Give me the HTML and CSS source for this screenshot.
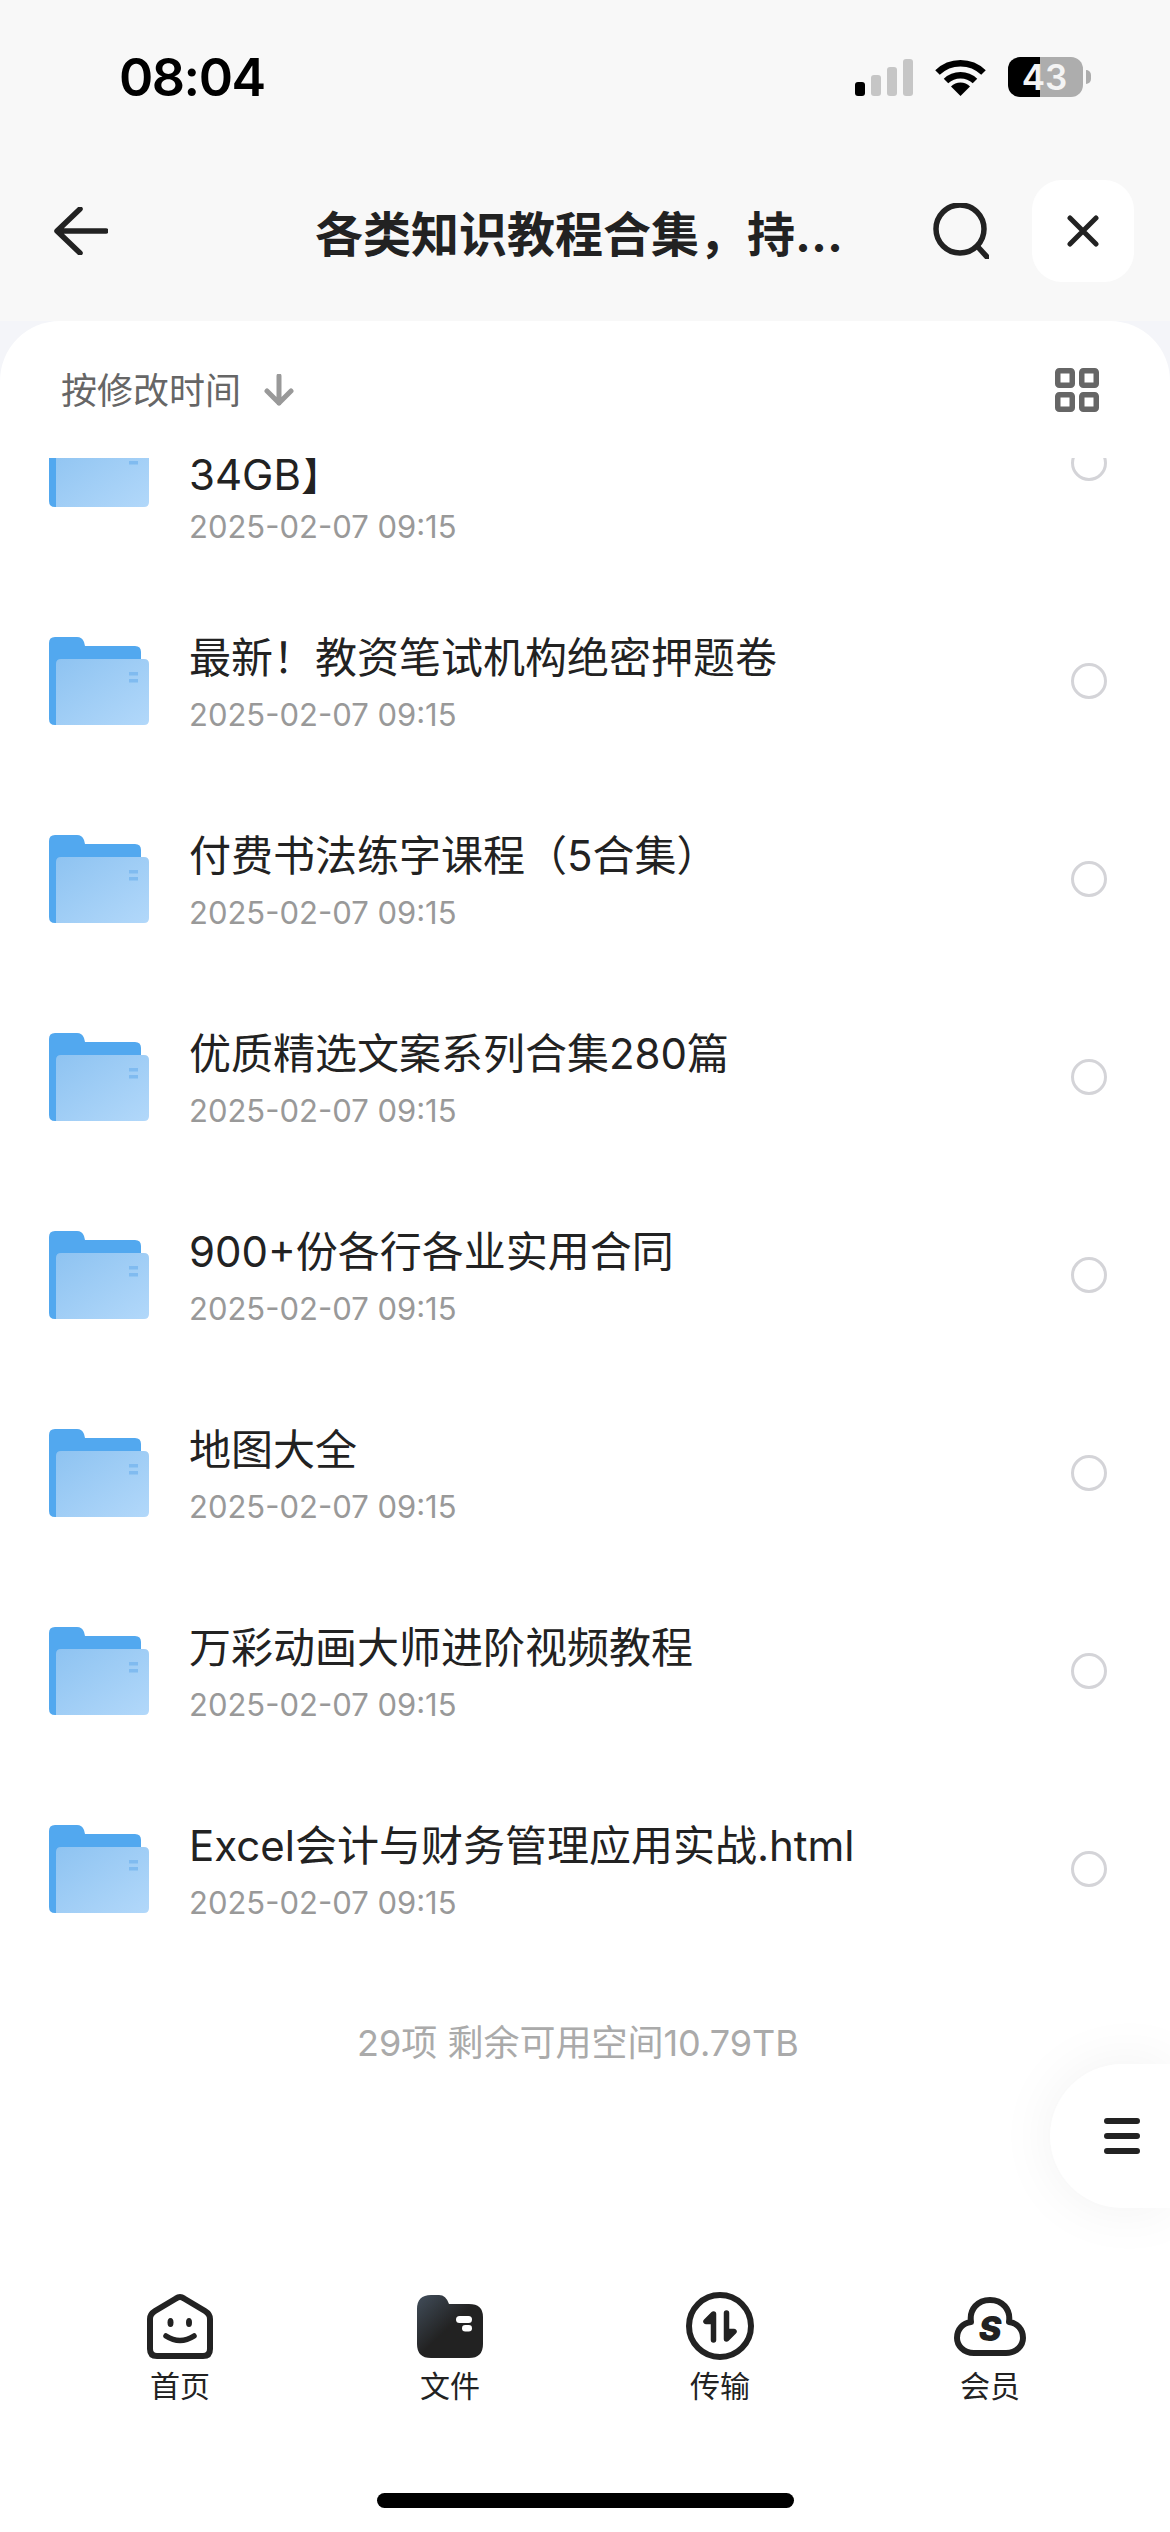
FILE: index.html
```html
<!DOCTYPE html>
<html lang="zh-CN">
  <head>
    <meta charset="UTF-8" />
    <meta name="viewport" content="width=device-width, initial-scale=1.0" />
    <title>文件</title>
    <link rel="stylesheet" href="styles.css">
  </head>
  <body>
    <svg class="defs" width="0" height="0">
      <defs>
        <linearGradient id="folderFront" x1="0" y1="0" x2="1" y2="1">
          <stop offset="0" stop-color="#8ec3f1" />
          <stop offset="1" stop-color="#b2d8fa" />
        </linearGradient>
        <linearGradient id="tabFolder" x1="0" y1="0" x2="1" y2="1">
          <stop offset="0" stop-color="#424e5b" />
          <stop offset="0.5" stop-color="#222222" />
        </linearGradient>
        <symbol id="folder" viewBox="0 0 100 88">
          <path d="M0 6Q0 0 6 0H28Q33 0 35 5L36 9H86Q92 9 92 15V60H8V88H6Q0 88 0 82Z" fill="#52a8ef" />
          <path d="M7 27Q7 22 12 22H95Q100 22 100 27V83Q100 88 95 88H7Z" fill="url(#folderFront)" />
          <path d="M80 35h9v3.500h-9zM80 42h9v3.500h-9z" fill="#80bbf0" />
        </symbol>
      </defs>
    </svg>

    <div class="page">
      <header class="top">
        <div class="status">
          <span class="time">08:04</span>
          <div class="status-icons">
            <div class="signal">
              <i class="on"></i><i class="b2"></i><i class="b3"></i><i class="b4"></i>
            </div>
            <svg class="wifi" width="51" height="37" viewBox="0 0 51 37">
              <path d="M2.500 13.500A33 33 0 0 1 48.500 13.500M11 22A21 21 0 0 1 40 22" fill="none" stroke="#000" stroke-width="6.500" />
              <path d="M25.500 37L16 27.500A13.500 13.500 0 0 1 35 27.500Z" fill="#000" />
            </svg>
            <div class="battery"><span>43</span></div>
            <div class="battery-nub"></div>
          </div>
        </div>
        <nav class="nav">
          <svg class="back" width="54" height="48" viewBox="0 0 54 48">
            <path d="M52 24H4M26 2L3 24L26 46" fill="none" stroke="#222" stroke-width="5.500" stroke-linecap="round" stroke-linejoin="round" />
          </svg>
          <h1 class="nav-title">各类知识教程合集，持...</h1>
          <svg class="search" width="56" height="56" viewBox="0 0 56 56">
            <circle cx="27" cy="26" r="24" fill="none" stroke="#222" stroke-width="5.500" />
            <path d="M45 44L54 54" stroke="#222" stroke-width="5.500" stroke-linecap="round" />
          </svg>
          <div class="close">
            <svg width="32" height="32" viewBox="0 0 32 32">
              <path d="M3 3L29 29M29 3L3 29" stroke="#222" stroke-width="5" stroke-linecap="round" />
            </svg>
          </div>
        </nav>
      </header>

      <main class="sheet">
        <div class="sort-bar">
          <div class="sort">
            <span>按修改时间</span>
            <svg width="30" height="32" viewBox="0 0 30 32">
              <path d="M15 2V29M3 17L15 29L27 17" fill="none" stroke="#999" stroke-width="5" stroke-linecap="round" stroke-linejoin="round" />
            </svg>
          </div>
          <svg width="44" height="44" viewBox="0 0 44 44">
            <g fill="none" stroke="#666" stroke-width="5.500">
              <rect x="2.750" y="2.750" width="14.500" height="14.500" rx="1.500" />
              <rect x="26.750" y="2.750" width="14.500" height="14.500" rx="1.500" />
              <rect x="2.750" y="26.750" width="14.500" height="14.500" rx="1.500" />
              <rect x="26.750" y="26.750" width="14.500" height="14.500" rx="1.500" />
            </g>
          </svg>
        </div>

        <div class="list-clip">
          <ul class="list">
            <li class="row row-cut">
              <svg class="folder"><use href="#folder" /></svg>
              <div class="info">
                <div class="name">34GB】</div>
                <div class="date">2025-02-07 09:15</div>
              </div>
              <span class="radio"></span>
            </li>
            <li class="row">
              <svg class="folder"><use href="#folder" /></svg>
              <div class="info">
                <div class="name">最新！教资笔试机构绝密押题卷</div>
                <div class="date">2025-02-07 09:15</div>
              </div>
              <span class="radio"></span>
            </li>
            <li class="row">
              <svg class="folder"><use href="#folder" /></svg>
              <div class="info">
                <div class="name">付费书法练字课程（5合集）</div>
                <div class="date">2025-02-07 09:15</div>
              </div>
              <span class="radio"></span>
            </li>
            <li class="row">
              <svg class="folder"><use href="#folder" /></svg>
              <div class="info">
                <div class="name">优质精选文案系列合集280篇</div>
                <div class="date">2025-02-07 09:15</div>
              </div>
              <span class="radio"></span>
            </li>
            <li class="row">
              <svg class="folder"><use href="#folder" /></svg>
              <div class="info">
                <div class="name">900+份各行各业实用合同</div>
                <div class="date">2025-02-07 09:15</div>
              </div>
              <span class="radio"></span>
            </li>
            <li class="row">
              <svg class="folder"><use href="#folder" /></svg>
              <div class="info">
                <div class="name">地图大全</div>
                <div class="date">2025-02-07 09:15</div>
              </div>
              <span class="radio"></span>
            </li>
            <li class="row">
              <svg class="folder"><use href="#folder" /></svg>
              <div class="info">
                <div class="name">万彩动画大师进阶视频教程</div>
                <div class="date">2025-02-07 09:15</div>
              </div>
              <span class="radio"></span>
            </li>
            <li class="row">
              <svg class="folder"><use href="#folder" /></svg>
              <div class="info">
                <div class="name">Excel会计与财务管理应用实战.html</div>
                <div class="date">2025-02-07 09:15</div>
              </div>
              <span class="radio"></span>
            </li>
          </ul>
          <div class="summary">29项 剩余可用空间10.79TB</div>
        </div>

        <div class="tabs">
          <div class="tab">
            <div class="tab-icon">
              <svg width="66" height="66" viewBox="0 0 66 66">
                <path d="M29 5.500Q33 2.500 37 5.500L58 18Q63 21 63 26V56Q63 63 56 63H10Q3 63 3 56V26Q3 21 8 18Z" fill="none" stroke="#222" stroke-width="6" stroke-linejoin="round" />
                <ellipse cx="23.500" cy="29.500" rx="3" ry="4.500" fill="#222" />
                <ellipse cx="42" cy="29.500" rx="3" ry="4.500" fill="#222" />
                <path d="M19 43Q33 52 47 43" fill="none" stroke="#222" stroke-width="5.500" stroke-linecap="round" />
              </svg>
            </div>
            <span>首页</span>
          </div>
          <div class="tab">
            <div class="tab-icon">
              <svg width="66" height="63" viewBox="0 0 66 63">
                <path d="M0 14Q0 0 14 0H22Q29 0 32 9H52Q66 9 66 22V49Q66 63 52 63H14Q0 63 0 49Z" fill="url(#tabFolder)" />
                <rect x="39" y="21" width="16" height="7" rx="3.500" fill="#fff" />
                <rect x="45" y="30" width="10" height="6.500" rx="3.250" fill="#fff" />
              </svg>
            </div>
            <span>文件</span>
          </div>
          <div class="tab">
            <div class="tab-icon">
              <svg width="68" height="68" viewBox="0 0 68 68">
                <circle cx="34" cy="34" r="31" fill="none" stroke="#222" stroke-width="6" />
                <path d="M27.500 48V22L20 29.500H27.500ZM40.500 21V47L48 39.500H40.500Z" fill="#222" stroke="#222" stroke-width="5.500" stroke-linejoin="round" stroke-linecap="round" />
              </svg>
            </div>
            <span>传输</span>
          </div>
          <div class="tab">
            <div class="tab-icon">
              <svg width="72" height="59" viewBox="0 0 72 59">
                <path d="M20 56C9 56 3 48 3 41C3 32 9 26 17 25C15 12 24 3 36 3C48 3 57 12 55 25C63 26 69 32 69 41C69 48 63 56 52 56Z" fill="none" stroke="#222" stroke-width="6" stroke-linejoin="round" />
                <text class="vip-s" x="36" y="44" text-anchor="middle">S</text>
              </svg>
            </div>
            <span>会员</span>
          </div>
        </div>
        <div class="home-bar"></div>
      </main>

      <div class="fab">
        <svg width="36" height="36" viewBox="0 0 36 36">
          <path d="M3 3H33M3 18H33M3 33H33" stroke="#222" stroke-width="6" stroke-linecap="round" />
        </svg>
      </div>
    </div>
  </body>
</html>
```

FILE: styles.css
```css
* {
  margin: 0;
  padding: 0;
  box-sizing: border-box;
  font-family: Inter, "Noto Sans CJK SC", sans-serif;
}

body {
  width: 1170px;
  height: 2532px;
  overflow: hidden;
}

.defs {
  position: absolute;
}

.page {
  position: relative;
  display: flex;
  flex-direction: column;
  height: 2532px;
  background: #f4f5f9;
  color: #222;
}

/* top area */
.top {
  height: 321px;
  background: #f8f8f8;
}

.status {
  display: flex;
  justify-content: space-between;
  align-items: center;
  height: 180px;
  padding: 0 79px 26px 119px;
}

.time {
  font-size: 52px;
  font-weight: 600;
  letter-spacing: -1.500px;
  color: #000;
}

.status-icons {
  display: flex;
  align-items: center;
}

.signal {
  display: flex;
  align-items: flex-end;
  gap: 6px;
  height: 37px;
  margin-right: 22px;
}

.signal i {
  display: block;
  width: 10px;
  height: 14px;
  border-radius: 3px;
  background: #000;
}

.signal .b2 {
  height: 21px;
  background: #c6c6c6;
}

.signal .b3 {
  height: 29px;
  background: #c6c6c6;
}

.signal .b4 {
  height: 37px;
  background: #c6c6c6;
}

.wifi {
  margin-right: 22px;
}

.battery {
  display: flex;
  justify-content: center;
  align-items: center;
  width: 75px;
  height: 40px;
  border-radius: 12px;
  background: linear-gradient(90deg, #000 43%, #adadad 43%);
}

.battery span {
  font-size: 35px;
  font-weight: 600;
  color: #f4f4f4;
  margin-right: 2px;
}

.battery-nub {
  width: 5px;
  height: 14px;
  margin-left: 3px;
  border-radius: 0 5px 5px 0;
  background: #adadad;
}

.nav {
  display: flex;
  align-items: center;
  height: 102px;
  padding: 0 36px 0 54px;
}

.nav-title {
  flex: 1;
  padding-left: 207px;
  font-size: 48px;
  font-weight: 700;
  color: #222;
}

.search {
  margin-right: 43px;
}

.close {
  display: flex;
  justify-content: center;
  align-items: center;
  width: 102px;
  height: 102px;
  border-radius: 30px;
  background: #fff;
}

/* sheet */
.sheet {
  flex: 1;
  display: flex;
  flex-direction: column;
  min-height: 0;
  background: #fff;
  border-radius: 60px 60px 0 0;
}

.sort-bar {
  display: flex;
  justify-content: space-between;
  align-items: center;
  height: 137px;
  padding: 0 71px 0 61px;
}

.sort {
  display: flex;
  align-items: center;
  gap: 23px;
  font-size: 36px;
  color: #666;
}

.sort span {
  margin-top: -3px;
}

.list-clip {
  flex: 1;
  min-height: 0;
  overflow: hidden;
}

.list {
  list-style: none;
}

.row {
  display: flex;
  align-items: center;
  height: 198px;
  padding: 0 63px 0 49px;
}

/* scrolled partly under the sort bar, title wraps to two lines */
.row-cut {
  height: 238px;
  margin-top: -114px;
}

.folder {
  width: 100px;
  height: 88px;
  flex-shrink: 0;
  margin-right: 40px;
}

.info {
  flex: 1;
  min-width: 0;
  padding-top: 6px;
}

.row-cut .info {
  padding-top: 0;
}

.name {
  font-size: 42px;
  line-height: 50px;
  color: #222;
}

.row-cut .name {
  padding-top: 81px;
  line-height: 30px;
}

.date {
  margin-top: 12px;
  font-size: 31px;
  line-height: 40px;
  color: #999;
}

.row-cut .date {
  margin-top: 17px;
}

.radio {
  width: 36px;
  height: 36px;
  border: 3px solid #d4d4d8;
  border-radius: 50%;
}

.summary {
  height: 150px;
  padding-right: 14px;
  line-height: 150px;
  text-align: center;
  font-size: 36px;
  color: #aaa;
}

/* bottom tabs */
.tabs {
  display: grid;
  grid-template-columns: repeat(4, 270px);
  padding: 0 45px;
}

.tab {
  display: flex;
  flex-direction: column;
  align-items: center;
  gap: 6px;
  font-size: 30px;
  line-height: 36px;
  color: #222;
}

.tab-icon {
  display: flex;
  justify-content: center;
  align-items: center;
  height: 72px;
}

.vip-s {
  font-size: 34px;
  font-weight: 900;
  font-style: italic;
  fill: #222;
}

.home-bar {
  width: 417px;
  height: 15px;
  margin: 89px auto 24px;
  border-radius: 8px;
  background: #000;
}

.fab {
  position: absolute;
  top: 2064px;
  right: 0;
  display: flex;
  align-items: center;
  width: 120px;
  height: 144px;
  padding-left: 54px;
  border-radius: 72px 0 0 72px;
  background: #fff;
  box-shadow: 0 0 60px rgba(0, 0, 0, 0.06);
}
```
